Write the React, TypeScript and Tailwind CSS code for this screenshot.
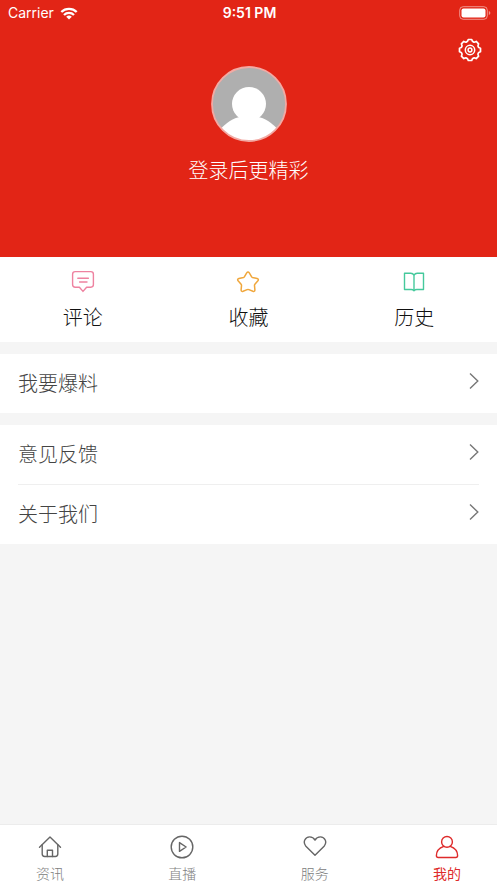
import type { ReactNode } from "react";

const actions = [
  {
    label: "评论",
    icon: (
      <svg viewBox="0 0 24 24" className="size-6 text-[#ee82a0]" fill="none" stroke="currentColor" strokeWidth="1.4" strokeLinecap="round" strokeLinejoin="round">
        <path d="M4.2 1.6h15.6q2.6 0 2.6 2.6v10.4q0 2.6-2.6 2.6h-4.2L12 21.4l-3.6-4.2H4.2q-2.6 0-2.6-2.6V4.2q0-2.6 2.6-2.6z" />
        <path d="M6.8 8.2h10.6M8.6 12h7.4" />
      </svg>
    ),
  },
  {
    label: "收藏",
    icon: (
      <svg viewBox="0 0 24 24" className="size-6 text-[#f0a73c]" fill="none" stroke="currentColor" strokeWidth="1.5" strokeLinejoin="round">
        <path d="M10.7 2.9q1.3-1.9 2.6 0l2.2 3.8q.4.6 1 .8l4.6 1q2 .6.8 2.3l-3 3.5q-.5.6-.4 1.3l.4 4.3q-.1 2-2 1.4l-4-1.7q-.9-.3-1.8 0l-4 1.7q-1.9.6-2-1.4l.4-4.3q.1-.7-.4-1.3l-3-3.5q-1.2-1.7.8-2.3l4.6-1q.6-.2 1-.8z" />
      </svg>
    ),
  },
  {
    label: "历史",
    icon: (
      <svg viewBox="0 0 24 24" className="size-6 text-[#45c99c]" fill="none" stroke="currentColor" strokeWidth="1.4" strokeLinejoin="round">
        <path d="M12 5.2q-1-2-3.2-2H2.5v16.3h6.7q1.8 0 2.8 1.2 1-1.2 2.8-1.2h6.7V3.2h-6.3q-2.2 0-3.2 2z" />
        <path d="M12 5.2v15" />
      </svg>
    ),
  },
];

const groups = [["我要爆料"], ["意见反馈", "关于我们"]];

const tabs = [
  {
    label: "资讯",
    active: false,
    icon: (
      <>
        <path d="M1.5 12.2 12 2l10.5 10.2" />
        <path d="M4.2 9.8v9.3q0 2.4 2.4 2.4h10.8q2.4 0 2.4-2.4V9.8" />
        <path d="M9.3 21.5v-6.3h5.2v6.3" />
      </>
    ),
  },
  {
    label: "直播",
    active: false,
    icon: (
      <>
        <circle cx="12" cy="12" r="10.8" />
        <path d="M9.5 7.6v8.8l6.6-4.4z" />
      </>
    ),
  },
  {
    label: "服务",
    active: false,
    icon: <path d="M12 20.3 2.9 11.2C-.6 7.2 2.2 1.9 6.6 1.9c2.5 0 4.3 1.1 5.4 3.2 1.1-2.1 2.9-3.2 5.4-3.2 4.4 0 7.2 5.3 3.7 9.3z" />,
  },
  {
    label: "我的",
    active: true,
    icon: (
      <>
        <circle cx="12" cy="6.9" r="5.4" />
        <path d="M8.8 11.3C4.7 12.7 1.4 16.2 1.4 20.5q0 2 1.8 2h17.6q1.8 0 1.8-2c0-4.3-3.3-7.8-7.4-9.2" />
      </>
    ),
  },
];

function StatusBar() {
  return (
    <div className="grid h-[26px] grid-cols-3 items-center pr-1.5 pl-2 font-['Inter','Liberation_Sans',sans-serif] text-sm">
      <div className="flex items-center gap-1.5">
        <span>Carrier</span>
        <svg viewBox="0 0 18 13" className="h-[13px] w-[18px]" fill="none" stroke="currentColor" strokeWidth="2.3">
          <path d="M1.3 5a11 11 0 0 1 15.4 0M4 8a7 7 0 0 1 10 0" />
          <path d="M9 12.5 6.2 9.8a4 4 0 0 1 5.6 0z" fill="currentColor" stroke="none" />
        </svg>
      </div>
      <span className="text-center font-semibold">9:51 PM</span>
      <svg viewBox="0 0 32 14" className="h-3.5 w-8 justify-self-end" fill="none">
        <rect x=".7" y=".7" width="27.6" height="12.6" rx="3.5" stroke="#fff" strokeOpacity=".5" />
        <rect x="2.5" y="2.5" width="24" height="9" rx="2" fill="#fff" />
        <path d="M29.8 5v4q1.6-.6 1.6-2t-1.6-2z" fill="#fff" fillOpacity=".5" />
      </svg>
    </div>
  );
}

function SettingsIcon() {
  return (
    <svg viewBox="0 0 24 24" className="size-6" fill="none" stroke="currentColor" strokeWidth="1.7" strokeLinejoin="round">
      <path d="M10.3 1.5h3.4Q14.8 5.3 18.2 3.4L20.6 5.8Q18.7 9.2 22.5 10.3v3.4Q18.7 14.8 20.6 18.2L18.2 20.6Q14.8 18.7 13.7 22.5h-3.4Q9.2 18.7 5.8 20.6L3.4 18.2Q5.3 14.8 1.5 13.7v-3.4Q5.3 9.2 3.4 5.8L5.8 3.4Q9.2 5.3 10.3 1.5z" />
      <circle cx="12" cy="12" r="4.7" strokeWidth="1.5" />
      <circle cx="12" cy="12" r="1.9" strokeWidth="1.5" />
    </svg>
  );
}

function MenuRow({ children }: { children: ReactNode }) {
  return (
    <button type="button" className="flex h-[59px] w-full items-center justify-between pb-0.5 text-left text-xl font-light text-[#444]">
      <span>{children}</span>
      <svg viewBox="0 0 10 18" className="mb-1 h-[18px] w-2.5" fill="none" stroke="#777" strokeWidth="1.4">
        <path d="m1 1.5 7.8 7.5L1 16.5" />
      </svg>
    </button>
  );
}

export default function App() {
  return (
    <div className="flex min-h-screen flex-col bg-[#f5f5f5] font-['Noto_Sans_CJK_SC',sans-serif]">
      <header className="bg-[#e22516] pb-[71px] text-white">
        <StatusBar />
        <div className="flex justify-end px-[15px] pt-3">
          <button type="button" aria-label="设置">
            <SettingsIcon />
          </button>
        </div>
        <button type="button" className="mx-auto mt-1 flex flex-col items-center gap-3">
          <svg viewBox="0 0 76 76" className="size-[76px]">
            <defs>
              <clipPath id="avatar">
                <circle cx="38" cy="38" r="37" />
              </clipPath>
            </defs>
            <circle cx="38" cy="38" r="37" fill="#afafaf" />
            <g clipPath="url(#avatar)" fill="#fff">
              <circle cx="38" cy="38" r="17" />
              <path d="M8 65C15 56 23 52 29 51h18C53 52 61 56 68 65v11H8z" />
            </g>
            <circle cx="38" cy="38" r="37" fill="none" stroke="#f2aaa4" strokeWidth="1.8" />
          </svg>
          <span className="text-xl leading-8 font-light">登录后更精彩</span>
        </button>
      </header>

      <section className="grid h-[85px] grid-cols-3 bg-white">
        {actions.map((action) => (
          <button key={action.label} type="button" className="flex flex-col items-center gap-[9px] pt-[13px] text-xl font-light text-[#111]">
            {action.icon}
            <span>{action.label}</span>
          </button>
        ))}
      </section>

      {groups.map((rows) => (
        <section key={rows[0]} className="mt-3 bg-white px-[18px]">
          <ul className="divide-y divide-[#efefef]">
            {rows.map((row) => (
              <li key={row}>
                <MenuRow>{row}</MenuRow>
              </li>
            ))}
          </ul>
        </section>
      ))}

      <nav className="mt-auto flex justify-between border-t border-[#ececec] bg-white px-[17px] pt-2.5">
        {tabs.map((tab) => (
          <a
            key={tab.label}
            href="#"
            aria-current={tab.active ? "page" : undefined}
            className={`flex w-[66px] flex-col items-center gap-1 ${tab.active ? "text-[#de2b2b]" : "font-light text-[#808080]"}`}
          >
            <svg
              viewBox="0 0 24 24"
              className={`size-6 ${tab.active ? "text-[#de2b2b]" : "text-[#666]"}`}
              fill="none"
              stroke="currentColor"
              strokeWidth="1.4"
              strokeLinecap="round"
              strokeLinejoin="round"
            >
              {tab.icon}
            </svg>
            <span className="text-sm">{tab.label}</span>
          </a>
        ))}
      </nav>
    </div>
  );
}
